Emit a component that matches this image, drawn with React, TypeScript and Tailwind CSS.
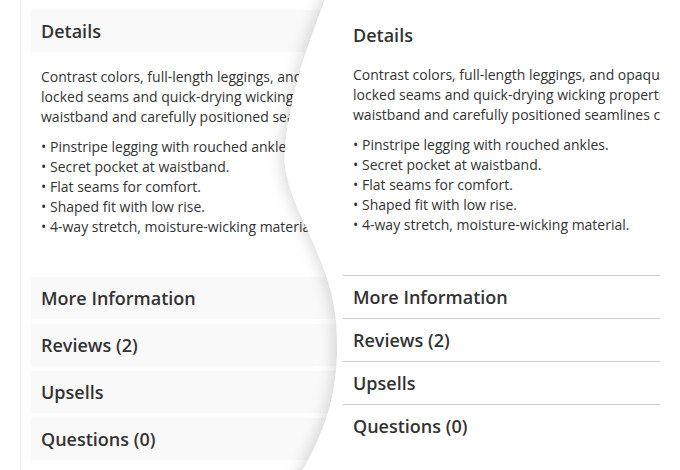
import React from 'react';

const font = { fontFamily: '"Open Sans", "Liberation Sans", sans-serif' };

const bodyLines = [
  'Contrast colors, full-length leggings, and opaque fabric make these pants a must-have. Flat-',
  'locked seams and quick-drying wicking properties keep you comfortable, while the wide',
  'waistband and carefully positioned seamlines create a flattering fit.',
];

const bullets = [
  'Pinstripe legging with rouched ankles.',
  'Secret pocket at waistband.',
  'Flat seams for comfort.',
  'Shaped fit with low rise.',
  '4-way stretch, moisture-wicking material.',
];

const sections = ['More Information', 'Reviews (2)', 'Upsells', 'Questions (0)'];

function Description() {
  return (
    <div className="text-[14px] leading-[20px] text-[#333] whitespace-nowrap">
      {bodyLines.map((l) => (
        <div key={l}>{l}</div>
      ))}
      <ul className="mt-[10px]">
        {bullets.map((b) => (
          <li key={b}>
            <span className="inline-block w-[9px]">•</span>
            {b}
          </li>
        ))}
      </ul>
    </div>
  );
}

function CurlOverlay() {
  return (
    <svg className="absolute left-0 top-0 pointer-events-none" width="680" height="470" viewBox="0 0 680 470">
      <defs>
        <filter id="curl" x="-20%" y="-10%" width="140%" height="120%">
          <feDropShadow dx="-4" dy="0" stdDeviation="7" floodColor="#000" floodOpacity="0.14" />
        </filter>
      </defs>
      <path
        d="M329 -20 L325 0 C310 40 290 90 285 150 C280 200 330 250 336 320 C342 390 325 430 303 470 L296 490 L700 490 L700 -20 Z"
        fill="#fff"
        filter="url(#curl)"
      />
    </svg>
  );
}

export default function App() {
  return (
    <div className="relative w-[680px] h-[470px] overflow-hidden bg-white flex" style={font}>
      {/* tabs style, left */}
      <div className="ml-[20px] w-[323px] h-full border-l border-[#f0f0f0] pl-[10px] overflow-hidden">
        <div className="mt-[10px] h-[42px] w-[340px] bg-[#f9f9f9] pl-[10px] flex items-center text-[18px] font-semibold text-[#333]">
          Details
        </div>
        <div className="mt-[15px] pl-[10px]">
          <Description />
        </div>
        <div className="mt-[40px] flex flex-col gap-[5px]">
          {sections.map((s) => (
            <div key={s} className="h-[42px] w-[340px] bg-[#f9f9f9] pl-[10px] flex items-center text-[18px] font-semibold text-[#333]">
              {s}
            </div>
          ))}
        </div>
      </div>

      <CurlOverlay />

      {/* accordion style, right */}
      <div className="relative z-10 w-[317px] h-full overflow-hidden">
        <div className="mt-[14px] h-[42px] pl-[10px] flex items-center text-[18px] font-semibold text-[#333]">
          Details
        </div>
        <div className="mt-[9px] pl-[10px]">
          <Description />
        </div>
        <div className="mt-[40px]">
          {sections.map((s) => (
            <div key={s} className="h-[43px] border-t border-[#cccccc] pl-[10px] flex items-center text-[18px] font-semibold text-[#333]">
              {s}
            </div>
          ))}
        </div>
      </div>
    </div>
  );
}
